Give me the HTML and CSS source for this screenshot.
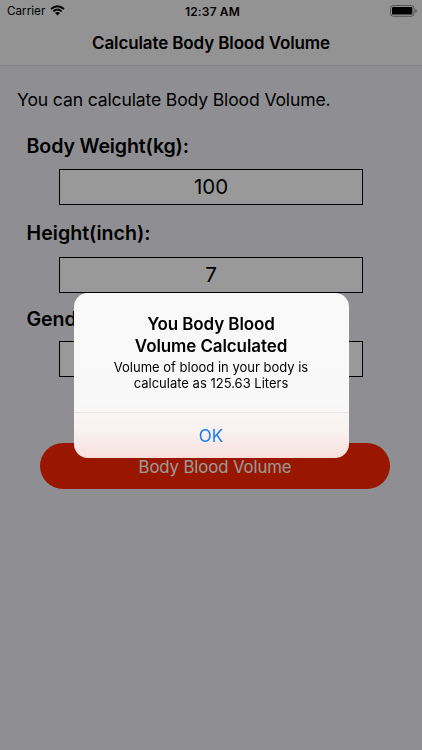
FILE: index.html
```
<!DOCTYPE html>
<html lang="en">

<head>
    <meta charset="utf-8">
    <meta name="viewport" content="width=device-width, initial-scale=1">
    <title>Calculate Body Blood Volume</title>
    <link rel="stylesheet" href="styles.css">
</head>

<body>
    <header class="topbar">
        <div class="status">
            <div class="carrier">
                <span>Carrier</span>
                <svg class="wifi" viewBox="0 0 15 11" width="15" height="11">
                    <path d="M1 4 Q7.500 -1.600 14 4" fill="none" stroke="#000" stroke-width="2" />
                    <path d="M3.300 6.400 Q7.500 2.700 11.700 6.400" fill="none" stroke="#000" stroke-width="1.900" />
                    <path d="M5 8.100 Q7.500 6.100 10 8.100 L7.500 10.600 Z" />
                </svg>
            </div>
            <span class="time">12:37 AM</span>
            <svg class="battery" viewBox="0 0 27 12" width="27" height="12">
                <rect x="0.500" y="0.500" width="23.500" height="10.800" rx="2.800" fill="none" stroke="#000" stroke-opacity="0.450" />
                <rect x="2" y="2" width="20.300" height="7.600" rx="1.200" />
                <path d="M25.300 4 Q26.800 4.500 26.800 5.900 Q26.800 7.300 25.300 7.800 Z" fill-opacity="0.500" />
            </svg>
        </div>
        <h1 class="title">Calculate Body Blood Volume</h1>
    </header>

    <main class="content">
        <p class="intro">You can calculate Body Blood Volume.</p>
        <form class="form">
            <div class="field weight">
                <label for="weight">Body Weight(kg):</label>
                <input type="text" id="weight" value="100">
            </div>
            <div class="field height">
                <label for="height">Height(inch):</label>
                <input type="text" id="height" value="7">
            </div>
            <div class="field gender">
                <label for="gender">Gender:</label>
                <input type="text" id="gender">
            </div>
            <button type="button" class="submit">Body Blood Volume</button>
        </form>
    </main>

    <div class="overlay">
        <div class="alert" role="alertdialog">
            <div class="alert-body">
                <h2>You Body Blood<br>Volume Calculated</h2>
                <p>Volume of blood in your body is<br>calculate as 125.63 Liters</p>
            </div>
            <button type="button" class="ok">OK</button>
        </div>
    </div>
</body>

</html>
```

FILE: styles.css
```
* {
    box-sizing: border-box;
}

body {
    margin: 0;
    height: 750px;
    overflow: hidden;
    font-family: Inter, "Liberation Sans", sans-serif;
    color: #000;
    background-color: #efeef5;
}

h1,
h2,
p {
    margin: 0;
}

.topbar {
    height: 66px;
    background-color: #f6f6f7;
    border-bottom: 1px solid #d9d9e2;
}

.status {
    display: grid;
    grid-template-columns: 1fr auto 1fr;
    align-items: center;
    height: 22px;
    padding: 0 4px 0 7px;
    font-size: 12px;
}

.carrier {
    display: flex;
    align-items: center;
    gap: 5px;
    font-size: 11.7px;
}

.wifi {
    margin-top: -1px;
}

.time {
    font-weight: 600;
    letter-spacing: 0.15px;
}

.battery {
    justify-self: end;
    margin-right: 1px;
}

.title {
    font-size: 17px;
    font-weight: 600;
    line-height: 43px;
    letter-spacing: -0.12px;
    text-align: center;
}

.content {
    padding: 22px 17px 0;
}

.intro {
    font-size: 17.6px;
    line-height: 24px;
    letter-spacing: -0.16px;
    white-space: nowrap;
}

.form {
    display: flex;
    flex-direction: column;
}

.field {
    display: flex;
    flex-direction: column;
    gap: 10px;
    padding-top: 22px;
}

.field.height {
    gap: 11px;
    padding-top: 16px;
}

.field.gender {
    gap: 9px;
    padding-top: 14px;
}

.field label {
    margin-left: 9.6px;
    font-size: 19.6px;
    font-weight: 600;
    line-height: 25px;
    letter-spacing: -0.15px;
}

.field.height label {
    letter-spacing: 0;
}

.field input {
    width: 304px;
    height: 36px;
    margin-left: 42px;
    padding: 0 0 2px;
    font-family: inherit;
    font-size: 20.5px;
    text-align: center;
    color: #000;
    background-color: #fff;
    border: 1px solid #000;
    border-radius: 0;
}

.submit {
    width: 350px;
    height: 46px;
    margin: 66px 0 0 23px;
    padding: 2px 0 0;
    font-family: inherit;
    font-size: 16.8px;
    letter-spacing: -0.12px;
    color: #fff;
    background-color: #ff2600;
    border: none;
    border-radius: 23px;
}

/* alert on top of the dimmed page */
.overlay {
    position: fixed;
    inset: 0;
    display: flex;
    justify-content: center;
    align-items: center;
    background-color: rgba(0, 0, 0, 0.4);
}

.alert {
    display: flex;
    flex-direction: column;
    width: 275px;
    height: 165px;
    overflow: hidden;
    text-align: center;
    background: linear-gradient(#f9f9f9 0, #f8f8f8 110px, #f9f3f2 135px, #f8e0dc 165px);
    border-radius: 14px;
}

.alert-body {
    height: 120px;
    padding-top: 20px;
    border-bottom: 1px solid #e9e5e5;
}

.alert h2 {
    font-size: 17px;
    font-weight: 600;
    line-height: 22px;
    letter-spacing: -0.1px;
}

.alert p {
    margin-top: 2px;
    font-size: 13px;
    line-height: 16px;
}

.ok {
    flex: 1;
    padding: 2px 0 0;
    font-family: inherit;
    font-size: 17px;
    color: #1a7df2;
    background: none;
    border: none;
}
```
